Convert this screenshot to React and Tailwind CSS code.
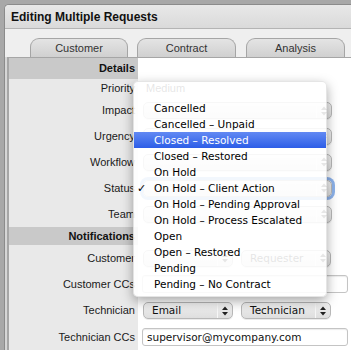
import React from "react";

const sans = "font-['Liberation_Sans',Arial,sans-serif]";
const deja = "font-['DejaVu_Sans',Verdana,sans-serif]";

function Arrows() {
  return (
    <svg width="6" height="10" viewBox="0 0 6 10" className="shrink-0">
      <path d="M0 4 L3 0.5 L6 4 Z" fill="#222" />
      <path d="M0 6 L3 9.5 L6 6 Z" fill="#222" />
    </svg>
  );
}

function Select({ text, w, ring }) {
  return (
    <div
      className={`h-[17px] rounded-[5px] border border-[#b8b8b8] bg-gradient-to-b from-[#f3f3f3] to-[#dedede] flex items-center shadow-[0_1px_0_rgba(0,0,0,0.08)] ${w} ${ring ? "ring-[3px] ring-[#8db2ea]" : ""}`}
    >
      <div className={`flex-1 pl-[8px] text-[10.5px] leading-none text-[#111] ${deja}`}>{text}</div>
      <div className="w-[15px] h-full flex items-center justify-center border-l border-[#f7f7f7]">
        <Arrows />
      </div>
    </div>
  );
}

function Label({ children, h, header }) {
  return (
    <div
      className={`${h} flex items-center justify-end pr-[3px] text-[11px] leading-none ${
        header ? "bg-[#c9c9c9] font-bold text-[#111]" : "bg-[#e9e9e9] text-[#1a1a1a]"
      }`}
    >
      {children}
    </div>
  );
}

const items = [
  "Cancelled",
  "Cancelled – Unpaid",
  "Closed – Resolved",
  "Closed – Restored",
  "On Hold",
  "On Hold – Client Action",
  "On Hold – Pending Approval",
  "On Hold – Process Escalated",
  "Open",
  "Open – Restored",
  "Pending",
  "Pending – No Contract",
];

export default function App() {
  const rows = [
    { label: "Details", h: "h-[21px]", header: true, value: null },
    { label: "Priority", h: "h-[19px]", value: <span className="text-[11px] pl-[3px] text-[#111]">Medium</span> },
    { label: "Impact", h: "h-[25px]", value: <Select text="" w="w-[189px]" /> },
    { label: "Urgency", h: "h-[26px]", value: <Select text="" w="w-[189px]" /> },
    { label: "Workflow", h: "h-[26px]", value: <Select text="" w="w-[189px]" /> },
    { label: "Status", h: "h-[26px]", value: <Select text="" w="w-[189px]" ring /> },
    { label: "Team", h: "h-[26px]", value: <Select text="" w="w-[189px]" /> },
    { label: "Notifications", h: "h-[18px]", header: true, value: null },
    {
      label: "Customer",
      h: "h-[26px]",
      value: (
        <div className="flex gap-[8px]">
          <Select text="" w="w-[90px]" />
          <Select text="Requester" w="w-[90px]" />
        </div>
      ),
    },
    {
      label: "Customer CCs",
      h: "h-[26px]",
      value: <div className="w-[206px] h-[18px] -ml-[1px] bg-white border border-[#c4c4c4] rounded-[3px] shadow-[inset_0_1px_1px_rgba(0,0,0,0.08)]" />,
    },
    {
      label: "Technician",
      h: "h-[27px]",
      value: (
        <div className="flex gap-[8px]">
          <Select text="Email" w="w-[90px]" />
          <Select text="Technician" w="w-[90px]" />
        </div>
      ),
    },
    {
      label: "Technician CCs",
      h: "h-[26px]",
      value: (
        <div
          className={`w-[206px] h-[18px] -ml-[1px] bg-white border border-[#c4c4c4] rounded-[3px] shadow-[inset_0_1px_1px_rgba(0,0,0,0.08)] flex items-center pl-[4px] text-[10.5px] leading-none text-[#111] ${deja}`}
        >
          supervisor@mycompany.com
        </div>
      ),
    },
  ];

  return (
    <div className={`relative w-[351px] h-[350px] overflow-hidden bg-[#a8a8a8] pl-[4px] pt-[4px] ${sans}`}>
      <div className="w-[420px] h-[420px] bg-[#e9e9e9] border-l border-t border-[#8b8b8b] rounded-tl-[5px] flex flex-col overflow-hidden">
        <div className="h-[24px] shrink-0 bg-gradient-to-b from-[#e8e8e8] to-[#dadada] border-b border-[#b4b4b4] flex items-center pl-[6px] text-[12px] font-bold text-[#111]">
          Editing Multiple Requests
        </div>
        <div className="h-[28px] shrink-0 bg-[#efefef] flex items-end pl-[25px]">
          {[
            ["Customer", "w-[98px] mr-[9px]"],
            ["Contract", "w-[99px] mr-[10px]"],
            ["Analysis", "w-[99px]"],
          ].map(([t, c]) => (
            <div
              key={t}
              className={`${c} h-[19px] rounded-t-[9px] border border-b-0 border-[#a5a5a5] bg-gradient-to-b from-[#e4e4e4] to-[#d0d0d0] flex items-center justify-center text-[11px] text-[#333]`}
            >
              {t}
            </div>
          ))}
        </div>
        <div className="flex-1 flex bg-[#d6d6d6] pl-[2px]">
          <div className="flex-1 border-l-2 border-t border-[#a6a6a6] bg-white flex">
            <div className="w-[129px] shrink-0 flex flex-col bg-[#e9e9e9]">
              {rows.map((r) => (
                <Label key={r.label} h={r.h} header={r.header}>
                  {r.label}
                </Label>
              ))}
            </div>
            <div className="flex-1 flex flex-col">
              {rows.map((r) => (
                <div key={r.label} className={`${r.h} flex items-center pl-[5px]`}>
                  {r.value}
                </div>
              ))}
            </div>
          </div>
        </div>
      </div>

      <div
        className={`absolute left-[133px] top-[81px] w-[194px] h-[216px] rounded-[5px] bg-[rgba(255,255,255,0.89)] border border-[rgba(0,0,0,0.1)] shadow-[0_4px_12px_rgba(0,0,0,0.35)] pt-[18px] ${deja}`}
      >
        {items.map((t) => {
          const sel = t === "Closed – Resolved";
          const checked = t === "On Hold – Client Action";
          return (
            <div
              key={t}
              className={`h-[16px] flex items-center text-[10.5px] leading-none ${
                sel ? "bg-gradient-to-b from-[#6289f3] to-[#2d5de7] text-white" : "text-black"
              }`}
            >
              <span className="w-[20px] pl-[3px] text-[11px]">{checked ? "✓" : ""}</span>
              <span>{t}</span>
            </div>
          );
        })}
      </div>
    </div>
  );
}
